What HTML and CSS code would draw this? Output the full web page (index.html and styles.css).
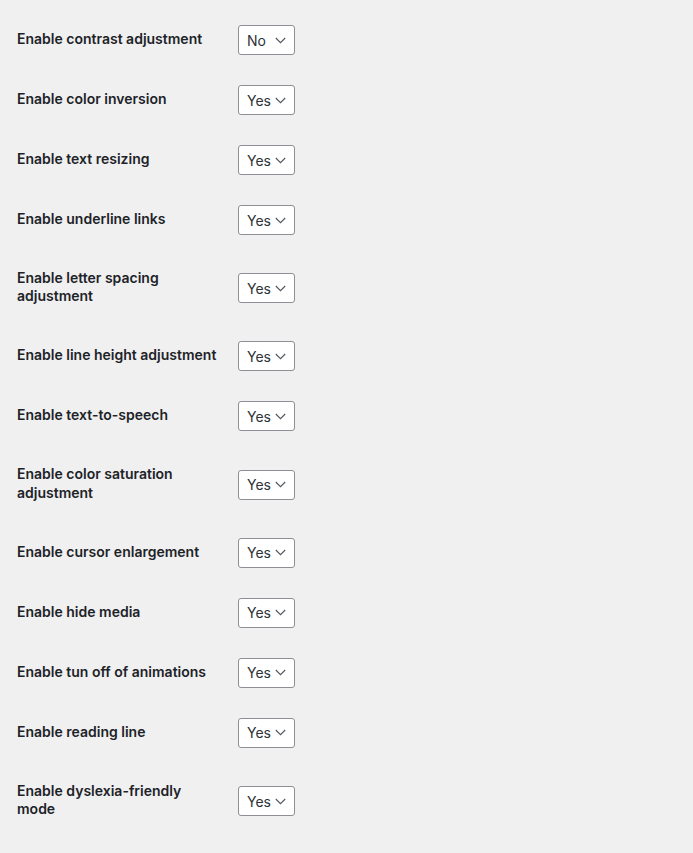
FILE: index.html
```html
<!DOCTYPE html>
<html lang="en">
<head>
<meta charset="utf-8">
<title>Accessibility settings</title>
<link rel="stylesheet" href="styles.css">
</head>
<body>
<div class="form-table">
  <div class="row"><div class="label">Enable contrast adjustment</div><div class="field"><div class="select"><span>No</span><svg viewBox="0 0 11 7" width="11" height="7"><path d="M0.8 1 L5.5 5.7 L10.2 1" fill="none" stroke="#50575e" stroke-width="1.1"/></svg></div></div></div>
  <div class="row"><div class="label">Enable color inversion</div><div class="field"><div class="select"><span>Yes</span><svg viewBox="0 0 11 7" width="11" height="7"><path d="M0.8 1 L5.5 5.7 L10.2 1" fill="none" stroke="#50575e" stroke-width="1.1"/></svg></div></div></div>
  <div class="row"><div class="label">Enable text resizing</div><div class="field"><div class="select"><span>Yes</span><svg viewBox="0 0 11 7" width="11" height="7"><path d="M0.8 1 L5.5 5.7 L10.2 1" fill="none" stroke="#50575e" stroke-width="1.1"/></svg></div></div></div>
  <div class="row"><div class="label">Enable underline links</div><div class="field"><div class="select"><span>Yes</span><svg viewBox="0 0 11 7" width="11" height="7"><path d="M0.8 1 L5.5 5.7 L10.2 1" fill="none" stroke="#50575e" stroke-width="1.1"/></svg></div></div></div>
  <div class="row"><div class="label">Enable letter spacing adjustment</div><div class="field"><div class="select"><span>Yes</span><svg viewBox="0 0 11 7" width="11" height="7"><path d="M0.8 1 L5.5 5.7 L10.2 1" fill="none" stroke="#50575e" stroke-width="1.1"/></svg></div></div></div>
  <div class="row"><div class="label">Enable line height adjustment</div><div class="field"><div class="select"><span>Yes</span><svg viewBox="0 0 11 7" width="11" height="7"><path d="M0.8 1 L5.5 5.7 L10.2 1" fill="none" stroke="#50575e" stroke-width="1.1"/></svg></div></div></div>
  <div class="row"><div class="label">Enable text-to-speech</div><div class="field"><div class="select"><span>Yes</span><svg viewBox="0 0 11 7" width="11" height="7"><path d="M0.8 1 L5.5 5.7 L10.2 1" fill="none" stroke="#50575e" stroke-width="1.1"/></svg></div></div></div>
  <div class="row"><div class="label">Enable color saturation adjustment</div><div class="field"><div class="select"><span>Yes</span><svg viewBox="0 0 11 7" width="11" height="7"><path d="M0.8 1 L5.5 5.7 L10.2 1" fill="none" stroke="#50575e" stroke-width="1.1"/></svg></div></div></div>
  <div class="row"><div class="label">Enable cursor enlargement</div><div class="field"><div class="select"><span>Yes</span><svg viewBox="0 0 11 7" width="11" height="7"><path d="M0.8 1 L5.5 5.7 L10.2 1" fill="none" stroke="#50575e" stroke-width="1.1"/></svg></div></div></div>
  <div class="row"><div class="label">Enable hide media</div><div class="field"><div class="select"><span>Yes</span><svg viewBox="0 0 11 7" width="11" height="7"><path d="M0.8 1 L5.5 5.7 L10.2 1" fill="none" stroke="#50575e" stroke-width="1.1"/></svg></div></div></div>
  <div class="row"><div class="label">Enable tun off of animations</div><div class="field"><div class="select"><span>Yes</span><svg viewBox="0 0 11 7" width="11" height="7"><path d="M0.8 1 L5.5 5.7 L10.2 1" fill="none" stroke="#50575e" stroke-width="1.1"/></svg></div></div></div>
  <div class="row"><div class="label">Enable reading line</div><div class="field"><div class="select"><span>Yes</span><svg viewBox="0 0 11 7" width="11" height="7"><path d="M0.8 1 L5.5 5.7 L10.2 1" fill="none" stroke="#50575e" stroke-width="1.1"/></svg></div></div></div>
  <div class="row"><div class="label">Enable dyslexia-friendly mode</div><div class="field"><div class="select"><span>Yes</span><svg viewBox="0 0 11 7" width="11" height="7"><path d="M0.8 1 L5.5 5.7 L10.2 1" fill="none" stroke="#50575e" stroke-width="1.1"/></svg></div></div></div>
</div>
</body>
</html>
```
FILE: styles.css
```css
html, body {
  margin: 0;
  padding: 0;
  background: #f0f0f1;
}
body {
  font-family: Inter, "Liberation Sans", sans-serif;
  font-size: 14px;
  color: #1d2327;
}
.form-table {
  display: flex;
  flex-direction: column;
  padding: 10px 0 0 17px;
}
.row {
  display: grid;
  grid-template-columns: 211px auto;
  align-items: center;
  justify-items: start;
}
.label {
  width: 200px;
  padding: 19px 11px 21px 0;
  font-weight: 600;
  line-height: 18.2px;
}
.field {
  padding: 15px 10px;
}
.select {
  box-sizing: border-box;
  width: 57px;
  height: 30px;
  display: flex;
  align-items: center;
  justify-content: space-between;
  padding: 0 8px 0 8px;
  background: #fff;
  border: 1px solid #8c8f94;
  border-radius: 3px;
  color: #2c3338;
  font-weight: 400;
  font-size: 14px;
}
.select svg {
  display: block;
}
```
